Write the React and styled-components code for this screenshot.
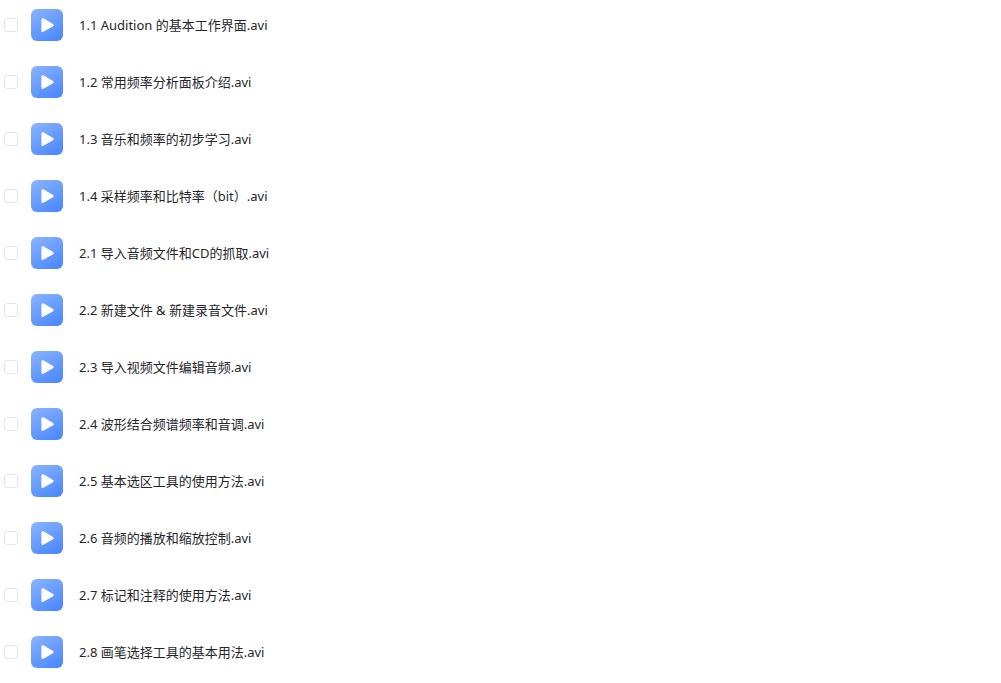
import { useState } from "react";
import styled, { createGlobalStyle } from "styled-components";

const files = [
  "1.1 Audition 的基本工作界面.avi",
  "1.2 常用频率分析面板介绍.avi",
  "1.3 音乐和频率的初步学习.avi",
  "1.4 采样频率和比特率（bit）.avi",
  "2.1 导入音频文件和CD的抓取.avi",
  "2.2 新建文件 & 新建录音文件.avi",
  "2.3 导入视频文件编辑音频.avi",
  "2.4 波形结合频谱频率和音调.avi",
  "2.5 基本选区工具的使用方法.avi",
  "2.6 音频的播放和缩放控制.avi",
  "2.7 标记和注释的使用方法.avi",
  "2.8 画笔选择工具的基本用法.avi",
];

function VideoIcon() {
  return (
    <IconTile>
      <svg width="32" height="32" viewBox="0 0 32 32" aria-hidden="true">
        <path
          d="M11.7 10.5v11.2l9.7-5.6z"
          fill="#fff"
          stroke="#fff"
          strokeWidth="2.6"
          strokeLinejoin="round"
        />
      </svg>
    </IconTile>
  );
}

export default function App() {
  const [selected, setSelected] = useState([]);

  const toggle = (name) => {
    setSelected((prev) =>
      prev.includes(name) ? prev.filter((n) => n !== name) : [...prev, name]
    );
  };

  return (
    <>
      <GlobalStyle />
      <FileList>
        {files.map((name) => (
          <li key={name}>
            <Row>
              <Checkbox
                type="checkbox"
                checked={selected.includes(name)}
                onChange={() => toggle(name)}
              />
              <VideoIcon />
              <FileName>{name}</FileName>
            </Row>
          </li>
        ))}
      </FileList>
    </>
  );
}

const GlobalStyle = createGlobalStyle`
  * {
    box-sizing: border-box;
  }

  body {
    margin: 0;
    background: #fff;
    font-family: "Noto Sans", "Noto Sans CJK SC", sans-serif;
  }
`;

const FileList = styled.ul`
  display: flex;
  flex-direction: column;
  gap: 25px;
  margin: 0;
  padding: 9px 4px;
  list-style: none;
`;

const Row = styled.label`
  display: flex;
  align-items: center;
  height: 32px;
  cursor: pointer;
`;

const Checkbox = styled.input`
  appearance: none;
  flex: none;
  width: 14px;
  height: 14px;
  margin: 0 13px 0 0;
  border: 1px solid #e4e4e5;
  border-radius: 3px;
  background: #fff;

  &:checked {
    border-color: #4a88ff;
    background: #4a88ff;
  }
`;

const IconTile = styled.span`
  flex: none;
  width: 32px;
  height: 32px;
  margin-right: 16px;
  border-radius: 6px;
  background: linear-gradient(150deg, #8ab4ff 0%, #4684ff 100%);

  svg {
    display: block;
  }
`;

const FileName = styled.span`
  overflow: hidden;
  color: #25262b;
  font-size: 13px;
  line-height: 20px;
  text-overflow: ellipsis;
  white-space: nowrap;
`;
